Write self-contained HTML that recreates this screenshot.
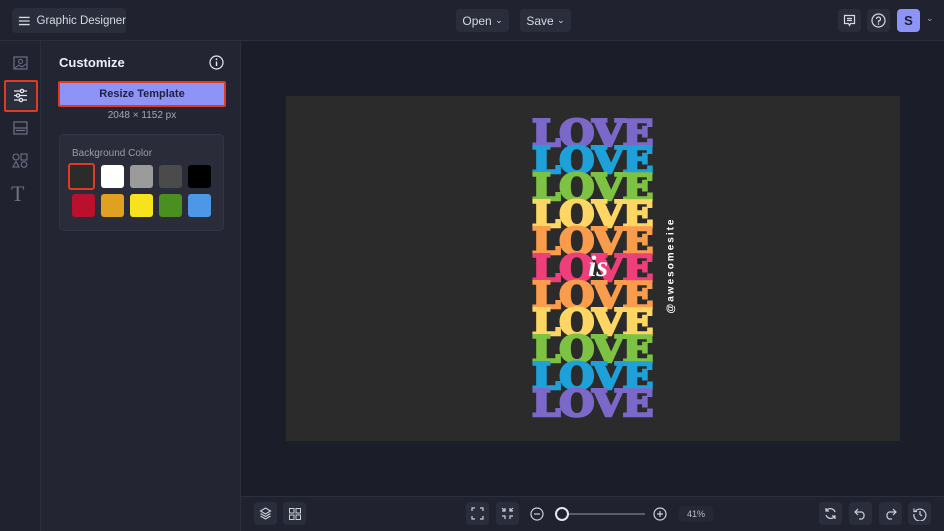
<!DOCTYPE html>
<html><head><meta charset="utf-8"><style>
*{margin:0;padding:0;box-sizing:border-box}
body{width:944px;height:531px;background:#1b1d28;font-family:"Liberation Sans",sans-serif;position:relative;overflow:hidden;color:#e6e7ee}
.abs{position:absolute}
.top{left:0;top:0;width:944px;height:41px;background:#202230;border-bottom:1px solid #2c2f3d}
.btn{position:absolute;background:#2a2d3b;border-radius:4px;color:#d8d9e2;font-size:12px;display:flex;align-items:center;justify-content:center;white-space:nowrap}
.side{left:0;top:41px;width:41px;height:490px;background:#202230;border-right:1px solid #2c2f3d}
.panel{left:41px;top:41px;width:200px;height:490px;background:#232533;border-right:1px solid #2c2f3d}
.sw{position:absolute;width:23px;height:23px;border-radius:3px}
.bottom{left:241px;top:496px;width:703px;height:35px;background:#202230;border-top:1px solid #2c2f3d}
.ib{position:absolute;top:6px;width:23px;height:23px;background:#2a2d3b;border-radius:4px}
.love{position:absolute;left:532px;width:124px;height:27px;overflow:visible;font-family:"DejaVu Serif",serif;font-weight:bold;font-size:36px;line-height:27px;letter-spacing:-1px;transform:scaleX(1.12);transform-origin:left top;white-space:nowrap;-webkit-text-stroke:2.6px currentColor}
.love span{display:block;margin-top:1px}
</style></head><body>
<div class="abs top"></div>
<div class="btn" style="left:12px;top:8px;width:114px;height:25px;justify-content:flex-start;padding-left:6px;font-size:11.5px">
<svg width="14" height="12" viewBox="0 0 14 12"><path d="M1 2h12M1 6h12M1 10h12" stroke="#d8d9e2" stroke-width="1.5"/></svg><span style="margin-left:6px">Graphic Designer</span></div>
<div class="btn" style="left:456px;top:9px;width:53px;height:23px">Open&nbsp;<span style="font-size:9px">⌄</span></div>
<div class="btn" style="left:520px;top:9px;width:51px;height:23px">Save&nbsp;<span style="font-size:9px">⌄</span></div>
<div class="btn" style="left:838px;top:9px;width:23px;height:23px"><svg width="13" height="13" viewBox="0 0 13 13"><path d="M1.5 1.5h10v8h-4l-1 2-1-2h-4z M4 4.5h5M4 6.5h5" fill="none" stroke="#d8d9e2" stroke-width="1.2"/></svg></div>
<div class="btn" style="left:867px;top:9px;width:23px;height:23px"><svg width="15" height="15" viewBox="0 0 15 15"><circle cx="7.5" cy="7.5" r="6.5" fill="none" stroke="#d8d9e2" stroke-width="1.2"/><path d="M5.5 6a2 2 0 1 1 2 2v1.5" fill="none" stroke="#d8d9e2" stroke-width="1.2"/><circle cx="7.5" cy="11" r=".8" fill="#d8d9e2"/></svg></div>
<div class="btn" style="left:897px;top:9px;width:23px;height:23px;background:#8d93f7;color:#1d1f33;font-weight:bold;font-size:13px">S</div>
<div class="abs" style="left:926px;top:13px;font-size:9px;color:#aaa">⌄</div>

<div class="abs side"></div>
<svg class="abs" style="left:13px;top:56px" width="15" height="14" viewBox="0 0 15 14"><rect x="1" y="1" width="13" height="12" fill="none" stroke="#6d7185" stroke-width="1.2"/><circle cx="7.5" cy="5.5" r="2" fill="none" stroke="#6d7185"/><path d="M2 12l4-3 3 2 4-3" fill="none" stroke="#6d7185"/></svg>
<div class="abs" style="left:4px;top:80px;width:34px;height:32px;border:2px solid #e23a22;border-radius:2px;background:#2a2d3b"></div>
<svg class="abs" style="left:13px;top:88px" width="15" height="15" viewBox="0 0 15 15" fill="none" stroke="#e6e7ee" stroke-width="1.3"><path d="M1 3h13M1 7.5h13M1 12h13"/><circle cx="9" cy="3" r="1.6" fill="#2a2d3b"/><circle cx="5" cy="7.5" r="1.6" fill="#2a2d3b"/><circle cx="8" cy="12" r="1.6" fill="#2a2d3b"/></svg>
<svg class="abs" style="left:13px;top:121px" width="15" height="14" viewBox="0 0 15 14" fill="none" stroke="#6d7185" stroke-width="1.2"><rect x="1" y="1" width="13" height="12"/><path d="M1 7h13M3 9.5h9"/></svg>
<svg class="abs" style="left:12px;top:153px" width="16" height="15" viewBox="0 0 16 15" fill="none" stroke="#6d7185" stroke-width="1.1"><circle cx="4" cy="4" r="3"/><rect x="9" y="1" width="6" height="6"/><path d="M4 8.5l3 5.5H1z"/><circle cx="12" cy="11.5" r="2.8"/></svg>
<div class="abs" style="left:11px;top:181px;font-family:'Liberation Serif',serif;font-size:22px;color:#6d7185">T</div>

<div class="abs panel"></div>
<div class="abs" style="left:59px;top:55px;font-size:13px;font-weight:bold;color:#eceef5">Customize</div>
<svg class="abs" style="left:209px;top:55px" width="15" height="15" viewBox="0 0 15 15"><circle cx="7.5" cy="7.5" r="6.5" fill="none" stroke="#e6e7ee" stroke-width="1.2"/><path d="M7.5 6.5v4.5" stroke="#e6e7ee" stroke-width="1.4"/><circle cx="7.5" cy="4.3" r=".9" fill="#e6e7ee"/></svg>
<div class="abs" style="left:58px;top:81px;width:168px;height:26px;background:#8d93f7;border:2px solid #e23a22;border-radius:2px;color:#1e2140;font-size:11px;font-weight:bold;text-align:center;line-height:22px">Resize Template</div>
<div class="abs" style="left:58px;top:110px;width:168px;text-align:center;font-size:10px;color:#a6a8b6">2048 × 1152 px</div>
<div class="abs" style="left:59px;top:134px;width:165px;height:97px;background:#2a2c3a;border:1px solid #32354a;border-radius:5px"></div>
<div class="abs" style="left:72px;top:148px;font-size:10px;color:#9a9cad">Background Color</div>
<div class="sw" style="left:68px;top:163px;width:27px;height:27px;border:2px solid #e23a22;background:#2b2b2b"></div>
<div class="sw" style="left:101px;top:165px;background:#fff"></div>
<div class="sw" style="left:130px;top:165px;background:#9b9b9b"></div>
<div class="sw" style="left:159px;top:165px;background:#4b4b4b"></div>
<div class="sw" style="left:188px;top:165px;background:#000"></div>
<div class="sw" style="left:72px;top:194px;background:#b8102d"></div>
<div class="sw" style="left:101px;top:194px;background:#e0a021"></div>
<div class="sw" style="left:130px;top:194px;background:#f6e21f"></div>
<div class="sw" style="left:159px;top:194px;background:#4b8f20"></div>
<div class="sw" style="left:188px;top:194px;background:#4c97e6"></div>

<div class="abs" style="left:286px;top:96px;width:614px;height:345px;background:#2b2b2b"></div>
<div class="love" style="top:120px;color:#7b68c8"><span>LOVE</span></div>
<div class="love" style="top:147px;color:#1ea0d8"><span>LOVE</span></div>
<div class="love" style="top:174px;color:#7dc242"><span>LOVE</span></div>
<div class="love" style="top:201px;color:#fdd663"><span>LOVE</span></div>
<div class="love" style="top:228px;color:#f99d4c"><span>LOVE</span></div>
<div class="love" style="top:255px;color:#ef3f7a"><span>LOVE</span></div>
<div class="love" style="top:282px;color:#f99d4c"><span>LOVE</span></div>
<div class="love" style="top:309px;color:#fdd663"><span>LOVE</span></div>
<div class="love" style="top:336px;color:#7dc242"><span>LOVE</span></div>
<div class="love" style="top:363px;color:#1ea0d8"><span>LOVE</span></div>
<div class="love" style="top:390px;color:#7b68c8"><span>LOVE</span></div>
<div class="abs" style="left:588px;top:250px;font-family:'Liberation Serif',serif;font-style:italic;font-weight:bold;font-size:30px;color:#fff">is</div>
<div class="abs" style="left:611px;top:260px;width:120px;text-align:center;transform:rotate(-90deg);font-size:10px;font-weight:bold;letter-spacing:2px;color:#fff">@awesomesite</div>

<div class="abs bottom"></div>
<div class="ib" style="left:254px;top:502px"></div><svg class="abs" style="left:259px;top:507px" width="13" height="13" viewBox="0 0 13 13" fill="none" stroke="#cfd0da" stroke-width="1.1"><path d="M6.5 1l5 3-5 3-5-3z M1.5 6.5l5 3 5-3 M1.5 9l5 3 5-3"/></svg>
<div class="ib" style="left:283px;top:502px"></div><svg class="abs" style="left:289px;top:508px" width="12" height="12" viewBox="0 0 12 12" fill="none" stroke="#cfd0da"><rect x=".5" y=".5" width="4.5" height="4.5"/><rect x="7" y=".5" width="4.5" height="4.5"/><rect x=".5" y="7" width="4.5" height="4.5"/><rect x="7" y="7" width="4.5" height="4.5"/></svg>
<div class="ib" style="left:466px;top:502px"></div><svg class="abs" style="left:471px;top:507px" width="13" height="13" viewBox="0 0 13 13" fill="none" stroke="#cfd0da" stroke-width="1.2"><path d="M1 4V1h3M9 1h3v3M12 9v3H9M4 12H1V9"/></svg>
<div class="ib" style="left:496px;top:502px"></div><svg class="abs" style="left:501px;top:507px" width="13" height="13" viewBox="0 0 13 13" fill="none" stroke="#cfd0da" stroke-width="1.2"><path d="M1 4h3V1M1 1l3 3M12 4H9V1M12 1L9 4M1 9h3v3M9 12V9h3"/></svg>
<svg class="abs" style="left:530px;top:507px" width="14" height="14" viewBox="0 0 14 14" fill="none" stroke="#cfd0da" stroke-width="1.2"><circle cx="7" cy="7" r="6"/><path d="M4 7h6"/></svg>
<div class="abs" style="left:555px;top:513px;width:90px;height:2px;background:#5a5d6d"></div>
<div class="abs" style="left:555px;top:507px;width:14px;height:14px;border-radius:50%;background:#202230;border:2px solid #e6e7ee"></div>
<svg class="abs" style="left:653px;top:507px" width="14" height="14" viewBox="0 0 14 14" fill="none" stroke="#cfd0da" stroke-width="1.2"><circle cx="7" cy="7" r="6"/><path d="M4 7h6M7 4v6"/></svg>
<div class="abs" style="left:679px;top:506px;width:34px;height:16px;background:#262838;border-radius:3px;font-size:9px;color:#bbbcc8;text-align:center;line-height:16px">41%</div>
<div class="ib" style="left:819px;top:502px"></div><svg class="abs" style="left:824px;top:507px" width="13" height="13" viewBox="0 0 13 13" fill="none" stroke="#cfd0da" stroke-width="1.2"><path d="M11 5A5 5 0 0 0 2 4M2 1v3h3M2 8a5 5 0 0 0 9 1M11 12V9H8"/></svg>
<div class="ib" style="left:849px;top:502px"></div><svg class="abs" style="left:854px;top:508px" width="13" height="12" viewBox="0 0 13 12" fill="none" stroke="#cfd0da" stroke-width="1.2"><path d="M4 1L1 4l3 3M1 4h7a4 4 0 0 1 0 7H5"/></svg>
<div class="ib" style="left:879px;top:502px"></div><svg class="abs" style="left:884px;top:508px" width="13" height="12" viewBox="0 0 13 12" fill="none" stroke="#cfd0da" stroke-width="1.2"><path d="M9 1l3 3-3 3M12 4H5a4 4 0 0 0 0 7h3"/></svg>
<div class="ib" style="left:908px;top:502px"></div><svg class="abs" style="left:913px;top:507px" width="14" height="14" viewBox="0 0 14 14" fill="none" stroke="#cfd0da" stroke-width="1.2"><path d="M2.5 4A6 6 0 1 1 1 7M1 1.5v3h3M7 4v3.5l2 1.5"/></svg>
</body></html>
